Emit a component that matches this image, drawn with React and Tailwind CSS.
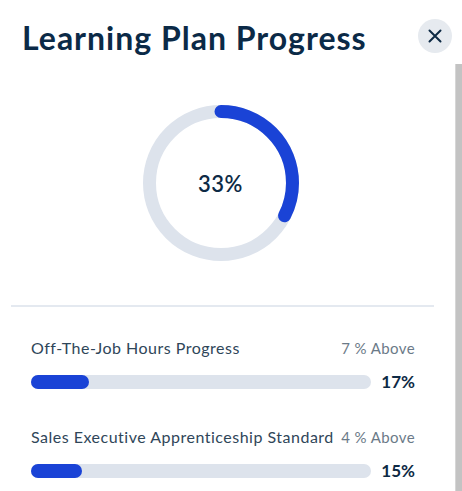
import React from "react";

function Bar({ label, above, pct, fill }) {
  return (
    <div className="flex flex-col">
      <div className="flex items-baseline justify-between">
        <span className="text-[16px] leading-[20px] tracking-[0.5px] text-[#2f4659]">{label}</span>
        <span className="text-[15px] leading-[20px] tracking-[0.4px] text-[#6b7a88]">{above}</span>
      </div>
      <div className="mt-[14px] flex items-center">
        <div className="relative h-[14px] w-[340px] rounded-full bg-[#dde3ec]">
          <div className="h-[14px] rounded-full bg-[#1a43d6]" style={{ width: fill }} />
        </div>
        <span className="ml-auto text-[17px] font-bold leading-[20px] text-[#0d2a45]">{pct}</span>
      </div>
    </div>
  );
}

export default function App() {
  const r = 71.5;
  const c = 2 * Math.PI * r;
  const p = 0.33;
  return (
    <div className="h-[491px] w-[462px] overflow-hidden bg-white" style={{ fontFamily: "Lato, 'Open Sans', sans-serif" }}>
      <div className="flex h-[64px] items-start justify-between pl-[22px] pr-[10px] pt-[20px]">
        <h1 className="text-[32px] font-bold leading-[36px] tracking-[1px] text-[#0b2a47]">Learning Plan Progress</h1>
        <button className="mt-[-1px] flex h-[34px] w-[34px] items-center justify-center rounded-full bg-[#e6eaef]">
          <svg width="16" height="16" viewBox="0 0 16 16" fill="none" stroke="#0d2a45" strokeWidth="2" strokeLinecap="round">
            <path d="M2.5 2.5 L13.5 13.5 M13.5 2.5 L2.5 13.5" />
          </svg>
        </button>
      </div>
      <div className="flex h-[427px]">
        <div className="flex-1">
          <div className="flex justify-center pt-[41px] pr-[14px]">
            <div className="relative h-[156px] w-[156px]">
              <svg width="156" height="156" viewBox="0 0 156 156">
                <circle cx="78" cy="78" r={r} fill="none" stroke="#dde3ec" strokeWidth="13" />
                <circle
                  cx="78"
                  cy="78"
                  r={r}
                  fill="none"
                  stroke="#1a43d6"
                  strokeWidth="13"
                  strokeLinecap="round"
                  strokeDasharray={`${c * p - 2} ${c}`}
                  transform="rotate(-90 78 78)"
                />
              </svg>
              <div className="absolute inset-0 flex items-center justify-center">
                <span className="text-[22px] font-semibold tracking-[0.5px] text-[#0d2a45]">33%</span>
              </div>
            </div>
          </div>
          <div className="ml-[11px] mr-[21px] mt-[44px] h-[2px] bg-[#e4e9f0]" />
          <div className="flex flex-col gap-[35px] pl-[31px] pr-[40px] pt-[31px]">
            <Bar label="Off-The-Job Hours Progress" above="7 % Above" pct="17%" fill="17%" />
            <Bar label="Sales Executive Apprenticeship Standard" above="4 % Above" pct="15%" fill="15%" />
          </div>
        </div>
        <div className="w-[7px] border-l border-[#d6d6d6] bg-[#c3c3c3]" />
      </div>
    </div>
  );
}
